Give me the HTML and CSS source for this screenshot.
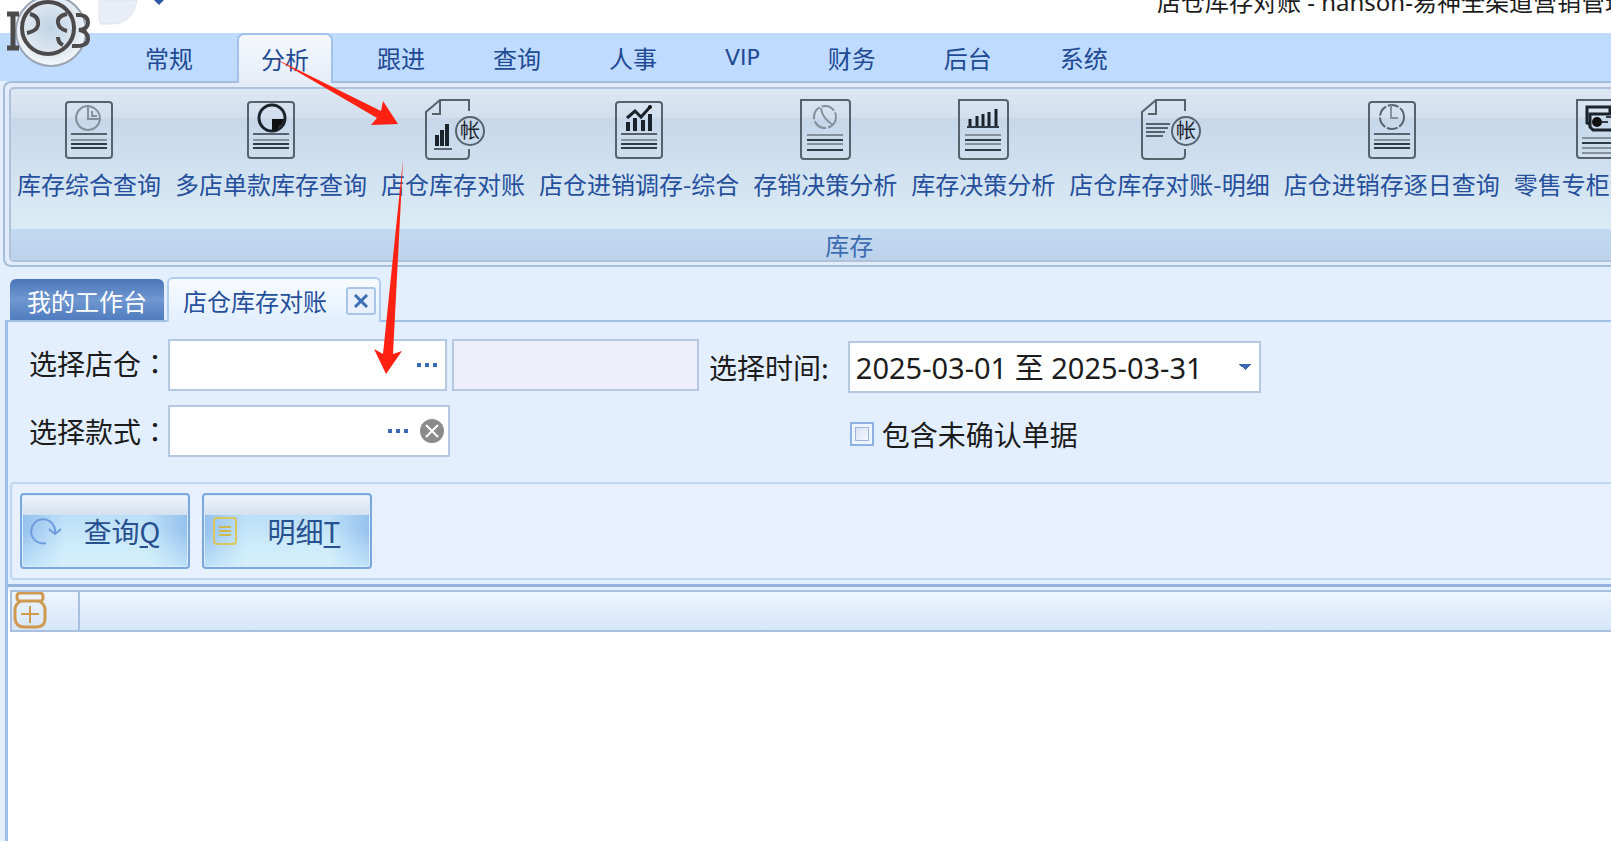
FILE: index.html
```html
<!DOCTYPE html>
<html lang="zh-CN">
<head>
    <meta charset="UTF-8">
    <meta name="viewport" content="width=device-width, initial-scale=1.0">
    <title>店仓库存对账</title>
    <link rel="stylesheet" href="styles.css">
</head>
<body>
    <header class="titlebar">
        <svg class="quick-access" width="80" height="26" viewBox="0 0 80 26">
            <path d="M2 0 V20 Q2 25 8 24 H14 Q36 24 40 0 Z" fill="#e9eef6" stroke="#dde4ee"/>
            <path d="M57 0 H67 L62 5 Z" fill="#2d57a8"/>
        </svg>
        <span class="window-title">店仓库存对账 - hanson-易神全渠道营销管理系统</span>
    </header>

    <svg class="app-logo" width="96" height="70" viewBox="0 0 96 70">
        <defs>
            <radialGradient id="orb" cx="50%" cy="45%" r="55%">
                <stop offset="0" stop-color="#bfd3e6"/>
                <stop offset="0.7" stop-color="#dfe8f1"/>
                <stop offset="1" stop-color="#f7f9fb"/>
            </radialGradient>
        </defs>
        <circle cx="51" cy="31" r="35" fill="url(#orb)" stroke="#9aa5b4" stroke-width="2"/>
        <g fill="none" stroke="#4d4a4b" stroke-width="4">
            <circle cx="48" cy="28" r="26"/>
            <path d="M7 14 H19 M7 48 H19 M13 14 V48" stroke-width="5"/>
            <path d="M30 14 Q39 16 38 25 Q37 31 27 33"/>
            <path d="M67 14 Q57 16 58 23 Q59 29 67 31"/>
            <path d="M58 37 Q58 43 63 45"/>
            <path d="M76 15 Q88 14 88 23 Q88 29 79 30 Q88 31 88 39 Q88 47 72 46"/>
        </g>
    </svg>

    <nav class="menu">
        <button class="menu-tab">常规</button>
        <button class="menu-tab active">分析</button>
        <button class="menu-tab">跟进</button>
        <button class="menu-tab">查询</button>
        <button class="menu-tab">人事</button>
        <button class="menu-tab latin">VIP</button>
        <button class="menu-tab">财务</button>
        <button class="menu-tab">后台</button>
        <button class="menu-tab">系统</button>
    </nav>

    <section class="ribbon">
        <div class="ribbon-group">
            <div class="ribbon-items">
                <button class="ribbon-item">
                    <svg class="icon" viewBox="0 0 64 64">
                        <rect x="9" y="5" width="46" height="56" rx="3"/>
                        <path class="soft" d="M30 9 A12 12 0 1 0 43 22 H31 V9 A13 13 0 0 1 43 22 M35 14 V19 H40"/>
                        <path d="M14 37 H50"/>
                        <path class="soft" d="M14 43 H50"/>
                        <path class="thick" d="M14 47 H50 M14 51 H50"/>
                    </svg>
                    <span>库存综合查询</span>
                </button>
                <button class="ribbon-item">
                    <svg class="icon" viewBox="0 0 64 64">
                        <rect x="9" y="5" width="46" height="56" rx="3"/>
                        <circle class="ring" cx="33" cy="21" r="13"/>
                        <path class="solid" d="M33 22 H45 Q44 27 40 30 Q38 34 33 33 Z"/>
                        <path d="M14 37 H50"/>
                        <path class="soft" d="M14 43 H50"/>
                        <path class="thick" d="M14 47 H50 M14 51 H50"/>
                    </svg>
                    <span>多店单款库存查询</span>
                </button>
                <button class="ribbon-item">
                    <svg class="icon" viewBox="0 0 64 64">
                        <path d="M48 14 V3 H19 L5 15 V58 Q5 62 9 62 H44 Q48 62 48 58 V52 M19 3 V17 H11"/>
                        <path class="bars" d="M16 49 V38 M21 49 V33 M26 49 V27"/>
                        <path d="M13 52 H31"/>
                        <circle cx="49" cy="34" r="14"/>
                        <text x="49" y="41">帐</text>
                    </svg>
                    <span>店仓库存对账</span>
                </button>
                <button class="ribbon-item">
                    <svg class="icon" viewBox="0 0 64 64">
                        <rect x="9" y="5" width="46" height="56" rx="3"/>
                        <path class="bars" d="M21 34 V25 M28 34 V21 M36 34 V23 M43 34 V17"/>
                        <path class="ring" d="M20 21 L28 14 L34 20 L43 10"/>
                        <circle class="solid" cx="43" cy="10" r="2"/>
                        <path d="M14 37 H50"/>
                        <path class="soft" d="M14 43 H50"/>
                        <path class="thick" d="M14 47 H50 M14 51 H50"/>
                    </svg>
                    <span>店仓进销调存-综合</span>
                </button>
                <button class="ribbon-item">
                    <svg class="icon" viewBox="0 0 64 64">
                        <path d="M8 3 H54 Q57 3 57 6 V58 Q57 62 53 62 H11 Q8 62 8 59 Z"/>
                        <circle class="soft" cx="32" cy="20" r="11" stroke-dasharray="14 2"/>
                        <path class="soft" d="M28 11 Q29 21 40 28"/>
                        <path class="soft" d="M14 38 H50 M14 47 H50"/>
                        <path class="thick" d="M14 43 H50 M14 53 H50"/>
                    </svg>
                    <span>存销决策分析</span>
                </button>
                <button class="ribbon-item">
                    <svg class="icon" viewBox="0 0 64 64">
                        <path d="M8 3 H54 Q57 3 57 6 V58 Q57 62 53 62 H11 Q8 62 8 59 Z"/>
                        <path class="bars thin" d="M19 29 V22 M26 29 V19 M32 29 V17 M38 29 V15 M45 29 V12"/>
                        <path class="thick" d="M16 30 H48"/>
                        <path class="soft" d="M14 38 H50 M14 47 H50"/>
                        <path class="thick" d="M14 43 H50 M14 53 H50"/>
                    </svg>
                    <span>库存决策分析</span>
                </button>
                <button class="ribbon-item">
                    <svg class="icon" viewBox="0 0 64 64">
                        <path d="M48 14 V3 H19 L5 15 V58 Q5 62 9 62 H44 Q48 62 48 58 V52 M19 3 V17 H11"/>
                        <path d="M9 27 H33 M9 31 H31 M9 35 H28 M9 39 H26"/>
                        <circle cx="49" cy="34" r="14"/>
                        <text x="49" y="41">帐</text>
                    </svg>
                    <span>店仓库存对账-明细</span>
                </button>
                <button class="ribbon-item">
                    <svg class="icon" viewBox="0 0 64 64">
                        <rect x="9" y="5" width="46" height="56" rx="3"/>
                        <circle cx="32" cy="20" r="12" stroke-dasharray="11 2"/>
                        <path class="soft" d="M31 8 V21 H38"/>
                        <path d="M14 37 H50"/>
                        <path class="soft" d="M14 43 H50"/>
                        <path class="thick" d="M14 47 H50 M14 51 H50"/>
                    </svg>
                    <span>店仓进销存逐日查询</span>
                </button>
                <button class="ribbon-item">
                    <svg class="icon" viewBox="0 0 64 64">
                        <path d="M11 3 H54 V61 H14 Q11 61 11 58 Z"/>
                        <path class="ring" d="M24 27 L21 26 V10 H44 V16"/>
                        <path class="ring" d="M24 17 H50 V33 H27 L24 30 Z"/>
                        <circle class="solid" cx="31" cy="25" r="5"/>
                        <path class="thick" d="M36 25 H42 M40 20 H45"/>
                        <path class="soft" d="M16 41 H50 M16 51 H50 M16 56 H50"/>
                        <path class="thick" d="M16 46 H50"/>
                    </svg>
                    <span>零售专柜进销存</span>
                </button>
            </div>
            <div class="ribbon-caption">库存</div>
        </div>
    </section>

    <div class="doc-tabs">
        <button class="doc-tab home">我的工作台</button>
        <div class="doc-tab current">
            <span>店仓库存对账</span>
            <button class="tab-close" aria-label="关闭">
                <svg width="16" height="14" viewBox="0 0 16 14"><path d="M2 1 L14 13 M14 1 L2 13"/></svg>
            </button>
        </div>
    </div>

    <main class="workspace">
        <form class="filters">
            <label class="field-label" for="store">选择店仓<span lang="zh-TW">：</span></label>
            <div class="field">
                <input type="text" id="store">
                <button type="button" class="dots" aria-label="选择店仓"><i></i><i></i><i></i></button>
            </div>
            <input type="text" class="store-name" aria-label="店仓名称" disabled>
            <label class="time-label" for="period">选择时间:</label>
            <select id="period" class="period">
                <option>2025-03-01 至 2025-03-31</option>
            </select>

            <label class="field-label second" for="style">选择款式<span lang="zh-TW">：</span></label>
            <div class="field wide">
                <input type="text" id="style">
                <button type="button" class="dots" aria-label="选择款式"><i></i><i></i><i></i></button>
                <button type="button" class="clear" aria-label="清除">
                    <svg width="24" height="24" viewBox="0 0 24 24">
                        <circle cx="12" cy="12" r="12" fill="#8b8b8b"/>
                        <path d="M6 6 L18 18 M18 6 L6 18" stroke="#fff" stroke-width="2"/>
                    </svg>
                </button>
            </div>
            <label class="unconfirmed"><input type="checkbox">包含未确认单据</label>
        </form>

        <div class="actions">
            <button class="action">
                <svg width="32" height="30" viewBox="0 0 32 30">
                    <path d="M16 27 A12 12 0 1 1 25 17 M19 13 L25 18 L31 13" fill="none" stroke="#6f9ce0" stroke-width="2"/>
                </svg>
                <span>查询<u>Q</u></span>
            </button>
            <button class="action">
                <svg width="32" height="30" viewBox="0 0 32 30">
                    <rect x="2" y="2" width="22" height="26" rx="3" fill="none" stroke="#d9c65e" stroke-width="2"/>
                    <path d="M7 11 H19 M7 15 H19 M7 19 H19" stroke="#cdb94e" stroke-width="2"/>
                </svg>
                <span>明细<u>T</u></span>
            </button>
        </div>

        <div class="grid">
            <div class="grid-header">
                <button class="grid-corner" aria-label="添加">
                    <svg width="34" height="38" viewBox="0 0 34 38">
                        <g fill="none" stroke="#cf9a50" stroke-width="3">
                            <rect x="4" y="1" width="26" height="8" rx="3"/>
                            <path d="M8 9 Q2 12 2 18 V27 Q3 35 11 35 H23 Q32 35 32 27 V18 Q32 12 26 9"/>
                            <path d="M17 14 V31 M8 22 H26" stroke-width="2"/>
                        </g>
                    </svg>
                </button>
            </div>
        </div>
    </main>

    <!-- Pointer arrows: 分析 tab, then the ribbon item down to the store field -->
    <svg class="pointers" width="420" height="380" viewBox="0 0 420 380">
        <path d="M274 58 L381 111 L383 101 L398 124 L371 125 L377 118 Z"/>
        <path d="M403 160 L393 354 L402 351 L386 374 L374 349 L383 354 Z"/>
    </svg>
</body>
</html>
```

FILE: styles.css
```css
* {
    box-sizing: border-box;
}

body {
    margin: 0;
    height: 100vh;
    display: flex;
    flex-direction: column;
    overflow: hidden;
    position: relative;
    background: #e3efff;
    color: #1c1c1c;
    font-family: "Noto Sans CJK SC", sans-serif;
    font-size: 24px;
}

button,
input,
select {
    font: inherit;
    color: inherit;
    margin: 0;
    padding: 0;
    border: 0;
    background: none;
}

/* Title bar */
.titlebar {
    display: flex;
    align-items: flex-start;
    height: 33px;
    padding-left: 97px;
    background: #fff;
    overflow: hidden;
    white-space: nowrap;
}

.quick-access {
    flex: none;
    margin-right: 980px;
}

.window-title {
    flex: none;
    margin-top: -14px;
    line-height: 32px;
    font-family: "Noto Sans", "Noto Sans CJK SC", sans-serif;
}

.app-logo {
    position: absolute;
    top: 0;
    left: 0;
}

/* Menu tabs */
.menu {
    display: flex;
    gap: 20px;
    height: 48px;
    padding-left: 121px;
    background: #bfdbff;
}

.menu-tab {
    height: 48px;
    padding: 0 24px;
    line-height: 50px;
    color: #1f4a94;
}

.menu-tab.latin {
    font-family: "DejaVu Sans", sans-serif;
    font-size: 22px;
}

.menu-tab.active {
    height: 50px;
    padding: 0 22px;
    line-height: 46px;
    border: 2px solid #a3c2ea;
    border-bottom: 0;
    border-radius: 7px 7px 0 0;
    background: linear-gradient(#f4f8fd, #e6edf7);
    z-index: 1;
}

/* Ribbon */
.ribbon {
    flex: none;
    margin-left: 3px;
    padding: 4px 0 3px 4px;
    border: 2px solid #a5bdd9;
    border-right: 0;
    border-radius: 8px 0 0 8px;
    background: #e2edf9;
    overflow: hidden;
}

.ribbon-group {
    width: max-content;
    border: 2px solid #aec2dc;
    border-radius: 5px;
    background: linear-gradient(#dde7f2 0, #d2dfee 28px, #c6d7ea 30px, #dcecf6 140px);
}

.ribbon-items {
    display: flex;
    gap: 14px;
    padding: 8px 6px 28px;
}

.ribbon-item {
    display: flex;
    flex-direction: column;
    align-items: center;
    gap: 6px;
    line-height: 34px;
    color: #26509b;
    white-space: nowrap;
}

.icon {
    width: 64px;
    height: 64px;
    fill: none;
    stroke: #56636f;
    stroke-width: 2;
}

.icon .soft {
    stroke: #84909c;
}

.icon .thick {
    stroke: #2f3b46;
}

.icon .ring {
    stroke: #1a222b;
    stroke-width: 3;
}

.icon .bars {
    stroke: #1a222b;
    stroke-width: 4;
}

.icon .bars.thin {
    stroke-width: 3;
}

.icon .solid {
    fill: #111;
    stroke: none;
}

.icon text {
    fill: #1a222b;
    stroke: none;
    font-size: 20px;
    text-anchor: middle;
}

.ribbon-caption {
    height: 31px;
    line-height: 31px;
    text-align: center;
    color: #3f6bb0;
    background: linear-gradient(#c3daf1, #bbd2ea);
}

/* Document tabs */
.doc-tabs {
    display: flex;
    align-items: flex-end;
    gap: 3px;
    flex: none;
    height: 53px;
    padding-left: 10px;
}

.doc-tab {
    height: 41px;
    padding: 0 17px;
    line-height: 44px;
    border-radius: 6px 6px 0 0;
}

.doc-tab.home {
    color: #fff;
    background: linear-gradient(#4a76b8, #6f97d0 50%, #4f7cbf);
}

.doc-tab.current {
    display: flex;
    align-items: center;
    gap: 19px;
    height: 45px;
    margin-bottom: -2px;
    padding: 0 3px 0 14px;
    border: 2px solid #b3cdf0;
    border-bottom: 0;
    background: linear-gradient(#f7fbff, #e3efff);
    color: #26509b;
    z-index: 1;
}

.tab-close {
    display: flex;
    align-items: center;
    justify-content: center;
    width: 30px;
    height: 28px;
    border: 2px solid #a9c5e8;
    border-radius: 3px;
    background: #e8f1fc;
}

.tab-close path {
    fill: none;
    stroke: #3f6fb5;
    stroke-width: 3;
}

/* Workspace */
.workspace {
    flex: 1;
    display: flex;
    flex-direction: column;
    margin-left: 5px;
    border-top: 2px solid #9fbfe9;
    border-left: 3px solid #9fbfe9;
}

.filters {
    display: grid;
    grid-template-columns: 139px 274px 247px auto 413px;
    grid-template-rows: 54px 52px;
    column-gap: 5px;
    row-gap: 12px;
    align-items: start;
    justify-content: start;
    padding: 17px 0 25px 21px;
    font-size: 28px;
}

.field-label,
.time-label {
    line-height: 48px;
    white-space: nowrap;
}

.field-label {
    grid-column: 1;
    width: 133px;
}

.field-label.second {
    line-height: 52px;
}

.time-label {
    margin-left: 5px;
    margin-right: 14px;
    line-height: 56px;
}

.field {
    display: flex;
    align-items: center;
    gap: 10px;
    height: 52px;
    width: 279px;
    margin-left: -5px;
    padding-right: 6px;
    border: 2px solid #b5c8e1;
    background: #fff;
}

.field.wide {
    width: 282px;
    padding-right: 4px;
}

.field input {
    flex: 1;
    min-width: 0;
    height: 100%;
    padding-left: 8px;
}

.dots {
    display: flex;
    gap: 4px;
    padding: 2px;
}

.dots i {
    width: 4px;
    height: 4px;
    background: #3c68b0;
}

.clear {
    display: flex;
}

.store-name {
    height: 52px;
    border: 2px solid #b5c8e1;
    background: #eeeffa;
}

.period {
    height: 52px;
    margin-top: 2px;
    padding: 0 6px;
    appearance: none;
    border: 2px solid #b5c8e1;
    /* drop-down triangle */
    background:
        conic-gradient(from -45deg at 50% 100%, #3c68b0 90deg, transparent 0) right 8px center / 12px 6px no-repeat,
        #fff;
    font-family: "Noto Sans", "Noto Sans CJK SC", sans-serif;
    font-size: 29px;
}

.unconfirmed {
    grid-column: 5;
    display: flex;
    align-items: center;
    gap: 8px;
    height: 58px;
    padding-left: 2px;
    white-space: nowrap;
}

.unconfirmed input {
    appearance: none;
    width: 24px;
    height: 24px;
    border: 2px solid #8fb0e4;
    background: linear-gradient(135deg, #d3dcf0, #fbfcff);
    outline: 1px solid #9db5dd;
    outline-offset: -6px;
    box-shadow: inset 0 0 0 3px #eef5ff;
}

.actions {
    display: flex;
    gap: 12px;
    margin: 0 0 4px 2px;
    padding: 9px 8px;
    border: 2px solid #c0d7f3;
    border-right: 0;
    border-radius: 4px 0 0 4px;
    background: #e6f0fe;
}

.action {
    display: flex;
    align-items: center;
    width: 170px;
    height: 76px;
    padding: 0 6px 0 8px;
    border: 2px solid #7ba7df;
    border-radius: 4px;
    background:
        linear-gradient(#f0f5fa, #d3e0ee 20px, transparent 20px),
        linear-gradient(transparent 50%, #d5f0fcaa),
        linear-gradient(90deg, #94c1ee, transparent 25%, transparent 75%, #94c1ee),
        linear-gradient(#b2d8f5, #d5f0fc);
    box-shadow: inset 0 0 0 1px #dcebfa;
    font-size: 28px;
    color: #27508f;
}

.action span {
    flex: 1;
    text-align: center;
}

.action u {
    text-underline-offset: 3px;
}

/* Result grid */
.grid {
    flex: 1;
    padding: 3px 0 0 2px;
    border-top: 3px solid #93b3db;
    background: linear-gradient(#e3efff 3px, #fff 3px);
}

.grid-header {
    display: flex;
    height: 42px;
    border: 2px solid #a9bfdf;
    border-right: 0;
    background: linear-gradient(#edf5ff, #d6e6f9);
}

.grid-corner {
    width: 68px;
    padding-left: 1px;
    border-right: 2px solid #a9bfdf;
    text-align: left;
}

.grid-corner svg {
    display: block;
}

.pointers {
    position: absolute;
    top: 0;
    left: 0;
    fill: #ff2213;
    pointer-events: none;
    z-index: 2;
}
```
